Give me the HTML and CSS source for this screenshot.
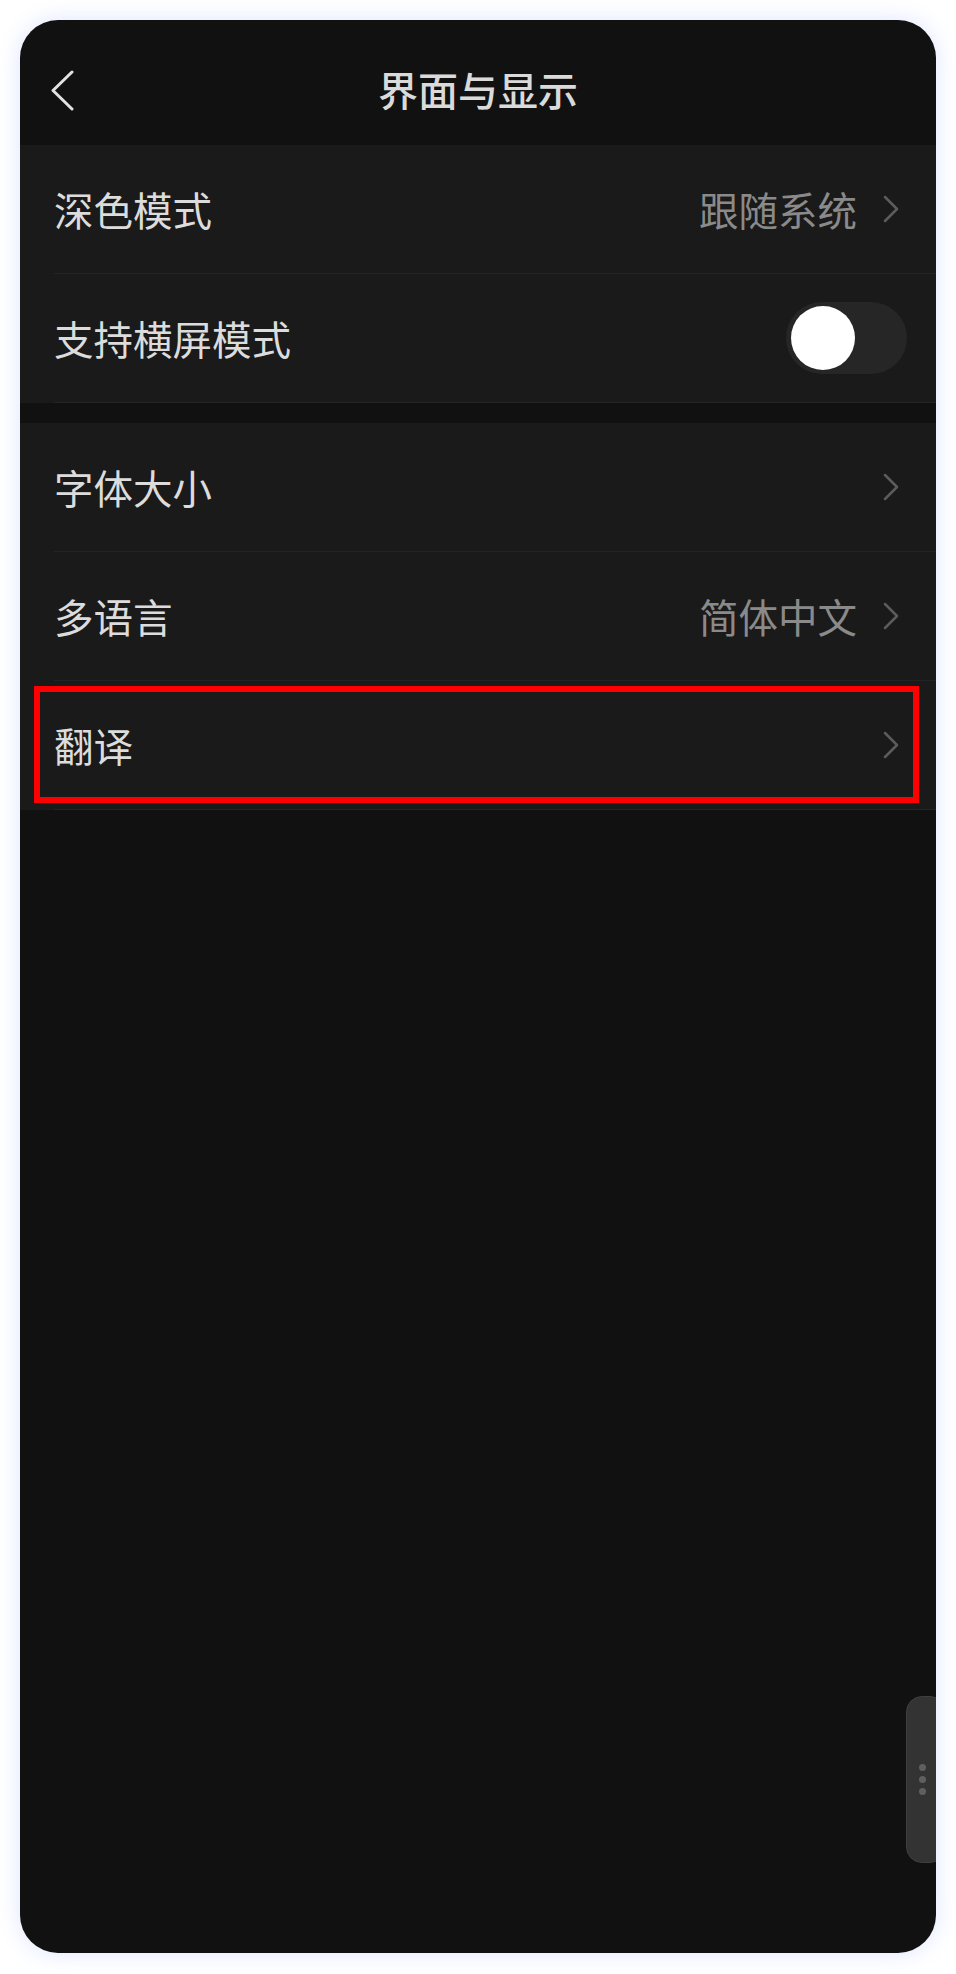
FILE: index.html
```html
<!DOCTYPE html>
<html lang="zh-CN">
<head>
  <meta charset="UTF-8" />
  <meta name="viewport" content="width=device-width, initial-scale=1" />
  <title>界面与显示</title>
  <link rel="stylesheet" href="styles.css">
</head>
<body>
  <div class="phone">
    <header class="topbar">
      <button class="back" aria-label="返回">
        <svg width="26" height="42" viewBox="0 0 26 42">
          <polyline points="22,2 3,20.5 22,39" fill="none" stroke="#e2e2e2" stroke-width="3" stroke-linecap="round" stroke-linejoin="round" />
        </svg>
      </button>
      <h1>界面与显示</h1>
      <span></span>
    </header>

    <section class="group">
      <div class="row">
        <span class="label">深色模式</span>
        <span class="value">跟随系统</span>
        <svg class="arrow" width="16" height="28" viewBox="0 0 16 28">
          <polyline points="2,2 14,14 2,26" fill="none" stroke="#5c5c5c" stroke-width="2.5" stroke-linecap="round" stroke-linejoin="round" />
        </svg>
      </div>
      <div class="row">
        <span class="label">支持横屏模式</span>
        <div class="switch" role="switch" aria-checked="false"></div>
      </div>
    </section>

    <section class="group">
      <div class="row">
        <span class="label">字体大小</span>
        <svg class="arrow" width="16" height="28" viewBox="0 0 16 28">
          <polyline points="2,2 14,14 2,26" fill="none" stroke="#5c5c5c" stroke-width="2.5" stroke-linecap="round" stroke-linejoin="round" />
        </svg>
      </div>
      <div class="row">
        <span class="label">多语言</span>
        <span class="value">简体中文</span>
        <svg class="arrow" width="16" height="28" viewBox="0 0 16 28">
          <polyline points="2,2 14,14 2,26" fill="none" stroke="#5c5c5c" stroke-width="2.5" stroke-linecap="round" stroke-linejoin="round" />
        </svg>
      </div>
      <div class="row marked">
        <span class="label">翻译</span>
        <svg class="arrow" width="16" height="28" viewBox="0 0 16 28">
          <polyline points="2,2 14,14 2,26" fill="none" stroke="#5c5c5c" stroke-width="2.5" stroke-linecap="round" stroke-linejoin="round" />
        </svg>
      </div>
    </section>

    <div class="handle">
      <span></span>
      <span></span>
      <span></span>
    </div>
  </div>
</body>
</html>
```

FILE: styles.css
```css
body {
  margin: 0;
  padding: 20px;
  background-color: #fff;
  font-family: "Noto Sans CJK SC", "Noto Sans", sans-serif;
}

.phone {
  position: relative;
  width: 916px;
  height: 1933px;
  background-color: #111;
  border-radius: 38px;
  overflow: hidden;
  box-shadow: 0 0 22px rgba(90, 130, 255, 0.2);
}

/* Kopfzeile */
.topbar {
  height: 125px;
  box-sizing: border-box;
  padding-top: 12px;
  display: grid;
  grid-template-columns: 1fr auto 1fr;
  align-items: center;
}

.back {
  justify-self: start;
  background: none;
  border: none;
  padding: 4px 0 0 30px;
  cursor: pointer;
  display: flex;
}

.topbar h1 {
  margin: 0;
  font-size: 40px;
  font-weight: 500;
  color: #dadada;
  line-height: 1;
}

/* Listen */
.group {
  background-color: #1a1a1a;
  margin-bottom: 20px;
}

.row {
  position: relative;
  height: 128px;
  margin-left: 34px;
  padding-right: 37px;
  border-bottom: 1px solid #242424;
  display: flex;
  align-items: center;
  gap: 26px;
}

.label {
  flex: 1;
  font-size: 39.5px;
  color: #dcdcdc;
  line-height: 1;
}

.value {
  font-size: 39.5px;
  color: #8a8a8a;
  line-height: 1;
}

.arrow {
  display: block;
  flex-shrink: 0;
}

.switch {
  position: relative;
  width: 121px;
  height: 72px;
  margin-right: -8px;
  border-radius: 36px;
  background-color: #262626;
}

.switch::after {
  content: "";
  position: absolute;
  top: 4px;
  left: 5px;
  width: 64px;
  height: 64px;
  border-radius: 50%;
  background: #fff;
}

/* rote Markierung */
.row.marked::after {
  content: "";
  position: absolute;
  top: 5px;
  bottom: 6px;
  left: -20px;
  right: 17px;
  border: 6px solid #f00;
}

/* seitlicher Griff */
.handle {
  position: absolute;
  top: 1676px;
  right: -10px;
  width: 40px;
  height: 167px;
  box-sizing: border-box;
  padding-left: 12px;
  background-color: #333;
  border: 1px solid #3f3f3f;
  border-radius: 16px;
  display: flex;
  flex-direction: column;
  justify-content: center;
  gap: 5px;
}

.handle span {
  width: 7px;
  height: 7px;
  border-radius: 50%;
  background-color: #5f5f5f;
}
```
